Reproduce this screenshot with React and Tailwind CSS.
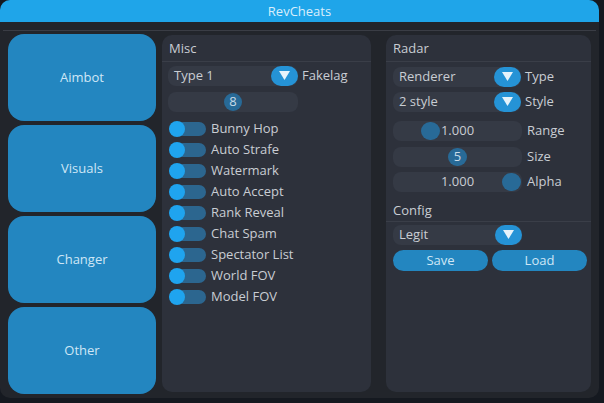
import React from 'react';

const font = { fontFamily: '"Open Sans", "Noto Sans", sans-serif' };

function Arrow() {
  return (
    <div className="w-[27px] h-[20px] rounded-full bg-[#2593d6] flex items-center justify-center">
      <svg width="11" height="9" viewBox="0 0 11 9">
        <polygon points="0,0 11,0 5.5,9" fill="#e6f3fb" />
      </svg>
    </div>
  );
}

function Combo({ value, label, width }) {
  return (
    <div className="flex items-center h-[21px]">
      <div className={`${width} h-[20px] rounded-[8px] bg-[#353a45] flex items-center justify-between`}>
        <span className="pl-[6px] text-[#c9cdd3]">{value}</span>
        <Arrow />
      </div>
      <span className="ml-[4px] text-[#c9cdd3]">{label}</span>
    </div>
  );
}

function Toggle({ label }) {
  return (
    <div className="flex items-center h-[21px]">
      <div className="relative w-[37px] h-[16px] ml-[1px]">
        <div className="absolute left-[2px] right-0 top-[1px] h-[14px] rounded-full bg-[#2c668f]" />
        <div className="absolute left-0 top-0 w-[16px] h-[16px] rounded-full bg-[#1fa4ef]" />
      </div>
      <span className="ml-[5px] text-[#c9cdd3]">{label}</span>
    </div>
  );
}

function Header({ children }) {
  return (
    <div className="border-b border-[#3a3e48] h-[27px] flex items-end pb-[3px] pl-[7px] text-[#c9cdd3]">
      {children}
    </div>
  );
}

export default function App() {
  const toggles = ['Bunny Hop', 'Auto Strafe', 'Watermark', 'Auto Accept', 'Rank Reveal', 'Chat Spam', 'Spectator List', 'World FOV', 'Model FOV'];
  return (
    <div className="w-[604px] h-[403px] bg-[#151920] text-[13px]" style={font}>
      <div className="w-[599px] h-[398px] rounded-[10px] bg-[#22252b] overflow-hidden flex flex-col">
        <div className="h-[22px] bg-[#1fa5e9] text-center leading-[22px] text-[#d9eefc]">RevCheats</div>
        <div className="h-[8px]" />
        <div className="mx-[3px] h-[1px] bg-[#3a3d45]" />
        <div className="flex px-[8px] pt-[3px]">
          <div className="w-[148px] flex flex-col gap-[4px]">
            {['Aimbot', 'Visuals', 'Changer', 'Other'].map((t) => (
              <div key={t} className="h-[87px] rounded-[16px] bg-[#2386c0] flex items-center justify-center text-[#cfe6f6]">
                {t}
              </div>
            ))}
          </div>
          <div className="ml-[6px] mt-[1px] w-[209px] h-[357px] rounded-[10px] bg-[#2d313b]">
            <Header>Misc</Header>
            <div className="px-[6px] pt-[3px] flex flex-col">
              <Combo value="Type 1" label="Fakelag" width="w-[130px]" />
              <div className="mt-[6px] w-[130px] h-[20px] rounded-[8px] bg-[#353a45] flex items-center justify-center">
                <div className="w-[18px] h-[18px] rounded-full bg-[#286a97] flex items-center justify-center text-[#c9dbe8]">8</div>
              </div>
              <div className="mt-[6px] flex flex-col">
                {toggles.map((t) => (
                  <Toggle key={t} label={t} />
                ))}
              </div>
            </div>
          </div>
          <div className="ml-[15px] mt-[1px] w-[205px] h-[357px] rounded-[10px] bg-[#2d313b]">
            <Header>Radar</Header>
            <div className="px-[7px] pt-[4px] flex flex-col">
              <Combo value="Renderer" label="Type" width="w-[128px]" />
              <div className="mt-[4px]">
                <Combo value="2 style" label="Style" width="w-[128px]" />
              </div>
              <div className="mt-[8px] flex items-center h-[21px]">
                <div className="relative w-[129px] h-[20px] rounded-[8px] bg-[#353a45] flex items-center justify-center text-[#c9cdd3]">
                  <div className="absolute left-[28px] top-[1px] w-[19px] h-[18px] rounded-full bg-[#286a97]" />
                  <span className="relative">1.000</span>
                </div>
                <span className="ml-[5px] text-[#c9cdd3]">Range</span>
              </div>
              <div className="mt-[5px] flex items-center h-[21px]">
                <div className="w-[129px] h-[20px] rounded-[8px] bg-[#353a45] flex items-center justify-center">
                  <div className="w-[19px] h-[18px] rounded-full bg-[#286a97] flex items-center justify-center text-[#c9dbe8]">5</div>
                </div>
                <span className="ml-[5px] text-[#c9cdd3]">Size</span>
              </div>
              <div className="mt-[4px] flex items-center h-[21px]">
                <div className="relative w-[129px] h-[20px] rounded-[8px] bg-[#353a45] flex items-center justify-center text-[#c9cdd3]">
                  <div className="absolute right-[1px] top-[1px] w-[19px] h-[18px] rounded-full bg-[#286a97]" />
                  <span className="relative">1.000</span>
                </div>
                <span className="ml-[5px] text-[#c9cdd3]">Alpha</span>
              </div>
            </div>
            <div className="mt-[3px] border-b border-[#3a3e48] h-[27px] flex items-end pb-[1px] pl-[7px] text-[#c9cdd3]">
              Config
            </div>
            <div className="pl-[7px] pt-[2px] flex flex-col gap-[5px]">
              <Combo value="Legit" label="" width="w-[129px]" />
              <div className="flex gap-[4px]">
                <div className="w-[95px] h-[21px] rounded-full bg-[#2386c0] flex items-center justify-center text-[#cfe6f6]">Save</div>
                <div className="w-[95px] h-[21px] rounded-full bg-[#2386c0] flex items-center justify-center text-[#cfe6f6]">Load</div>
              </div>
            </div>
          </div>
        </div>
      </div>
    </div>
  );
}
